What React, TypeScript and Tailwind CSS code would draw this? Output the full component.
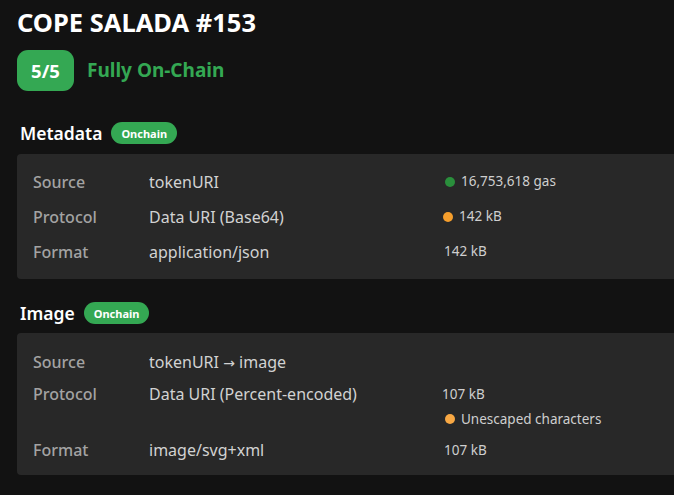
import React from "react";

function Dot({ color }: { color: string }) {
  return <span className={`inline-block w-[10px] h-[10px] rounded-full ${color}`} />;
}

function Badge() {
  return (
    <span className="inline-flex items-center h-[22px] px-[10px] rounded-full bg-[#34a853] text-white text-[11px] font-bold leading-none">
      Onchain
    </span>
  );
}

export default function App() {
  return (
    <div
      className="w-[674px] h-[495px] overflow-hidden bg-[#121212] text-white"
      style={{ fontFamily: '"Noto Sans", "Open Sans", sans-serif' }}
    >
      <div className="w-[740px] pl-[17px] pt-[6px]">
        <h1 className="text-[25.5px] leading-[32px] font-bold text-white">COPE SALADA #153</h1>

        <div className="flex items-center gap-[13px] mt-[12px]">
          <span className="inline-flex items-center justify-center w-[57px] h-[41px] rounded-[11px] bg-[#34a853] text-white text-[18.5px] font-bold">
            5/5
          </span>
          <span className="text-[19px] font-bold text-[#34a853]">Fully On-Chain</span>
        </div>

        {/* Metadata */}
        <div className="flex items-center gap-[9px] mt-[31px] pl-[3px]">
          <span className="text-[17.5px] leading-[22px] font-semibold text-white">Metadata</span>
          <Badge />
        </div>
        <div className="mt-[10px] rounded-[4px] bg-[#282828] py-[10px]">
          <div className="flex items-center h-[35px]">
            <span className="w-[132px] pl-[16px] text-[16px] font-medium text-[#a3a3a3]">Source</span>
            <span className="w-[296px] text-[16px] text-[#d2d2d2]">tokenURI</span>
            <span className="flex items-center gap-[6px] text-[13.5px] text-[#cfcfcf]">
              <Dot color="bg-[#2a8f3c]" />
              16,753,618 gas
            </span>
          </div>
          <div className="flex items-center h-[35px]">
            <span className="w-[132px] pl-[16px] text-[16px] font-medium text-[#a3a3a3]">Protocol</span>
            <span className="w-[294px] text-[16px] text-[#d2d2d2]">Data URI (Base64)</span>
            <span className="flex items-center gap-[6px] text-[13.5px] text-[#cfcfcf]">
              <Dot color="bg-[#f59e2c]" />
              142 kB
            </span>
          </div>
          <div className="flex items-center h-[35px]">
            <span className="w-[132px] pl-[16px] text-[16px] font-medium text-[#a3a3a3]">Format</span>
            <span className="w-[295px] text-[16px] text-[#d2d2d2]">application/json</span>
            <span className="text-[13.5px] text-[#cfcfcf]">142 kB</span>
          </div>
        </div>

        {/* Image */}
        <div className="flex items-center gap-[9px] mt-[23px] pl-[3px]">
          <span className="text-[17.5px] leading-[22px] font-semibold text-white">Image</span>
          <Badge />
        </div>
        <div className="mt-[9px] rounded-[4px] bg-[#282828] pt-[11px] pb-[11px]">
          <div className="flex items-start h-[32px] pt-[7px]">
            <span className="w-[132px] pl-[16px] text-[16px] leading-[22px] font-medium text-[#a3a3a3]">Source</span>
            <span className="w-[295px] text-[16px] leading-[22px] text-[#d2d2d2]">
              tokenURI{" "}
              <span style={{ fontFamily: '"DejaVu Sans", sans-serif' }} className="text-[14px]">→</span>{" "}
              image
            </span>
          </div>
          <div className="flex items-start h-[56px] pt-[7px]">
            <span className="w-[132px] pl-[16px] text-[16px] leading-[22px] font-medium text-[#a3a3a3]">Protocol</span>
            <span className="w-[293px] text-[16px] leading-[22px] text-[#d2d2d2]">Data URI (Percent-encoded)</span>
            <div className="flex flex-col">
              <span className="text-[13.5px] leading-[20px] mt-[1px] text-[#cfcfcf]">107 kB</span>
              <span className="flex items-center gap-[6px] mt-[5px] pl-[3px] text-[13.5px] leading-[20px] text-[#cfcfcf]">
                <Dot color="bg-[#f8a844]" />
                Unescaped characters
              </span>
            </div>
          </div>
          <div className="flex items-start h-[32px] pt-[7px]">
            <span className="w-[132px] pl-[16px] text-[16px] leading-[22px] font-medium text-[#a3a3a3]">Format</span>
            <span className="w-[295px] text-[16px] leading-[22px] text-[#d2d2d2]">image/svg+xml</span>
            <span className="text-[13.5px] leading-[22px] text-[#cfcfcf]">107 kB</span>
          </div>
        </div>
      </div>
    </div>
  );
}
